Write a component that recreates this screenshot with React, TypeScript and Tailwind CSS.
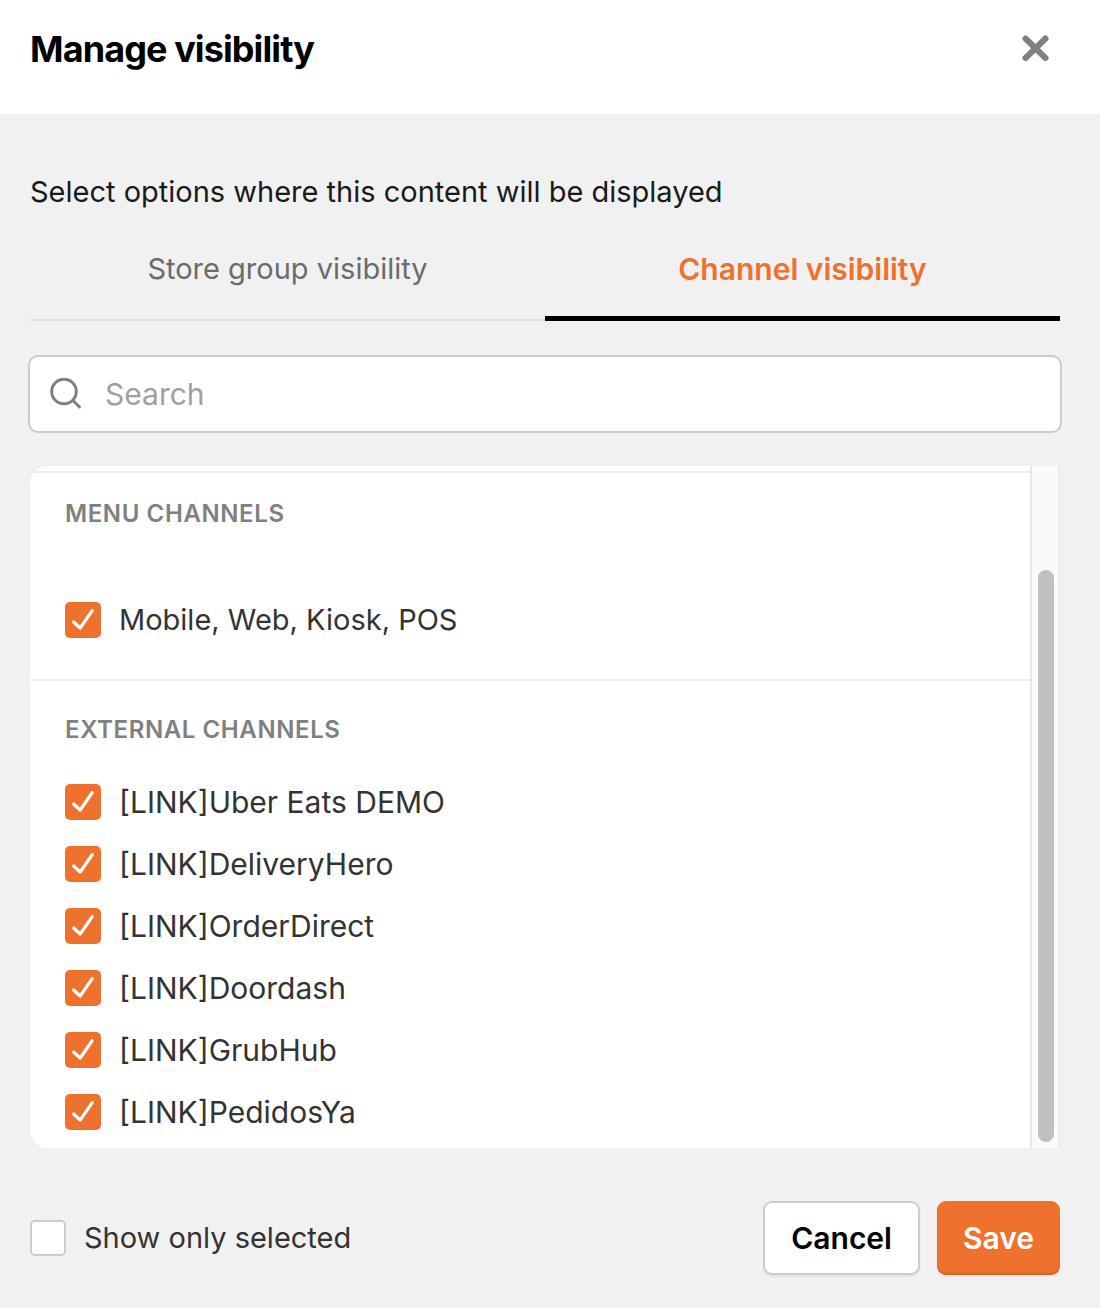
import { useState } from 'react';

interface Channel {
  id: string;
  name: string;
}

interface CheckboxProps {
  id: string;
  label: string;
  checked: boolean;
  small?: boolean;
  onChange: () => void;
}

type TabId = 'storeGroup' | 'channel';

const TABS: { id: TabId; label: string }[] = [
  { id: 'storeGroup', label: 'Store group visibility' },
  { id: 'channel', label: 'Channel visibility' }
];

const MENU_CHANNELS: Channel[] = [{ id: 'menu', name: 'Mobile, Web, Kiosk, POS' }];

const EXTERNAL_CHANNELS: Channel[] = [
  { id: 'uber_eats', name: '[LINK]Uber Eats DEMO' },
  { id: 'delivery_hero', name: '[LINK]DeliveryHero' },
  { id: 'order_direct', name: '[LINK]OrderDirect' },
  { id: 'doordash', name: '[LINK]Doordash' },
  { id: 'grubhub', name: '[LINK]GrubHub' },
  { id: 'pedidos_ya', name: '[LINK]PedidosYa' }
];

function Checkbox({ id, label, checked, small, onChange }: CheckboxProps) {
  return (
    <div className="flex items-center gap-[18px]">
      <span className="grid shrink-0">
        <input
          id={id}
          type="checkbox"
          checked={checked}
          onChange={onChange}
          className="col-start-1 row-start-1 size-9 appearance-none rounded-[5px] border-2 border-[#cccccc] bg-white checked:border-[#ee722e] checked:bg-[#ee722e]"
        />
        {checked && (
          <svg
            viewBox="0 0 36 36"
            fill="none"
            stroke="white"
            strokeWidth="3.2"
            strokeLinecap="round"
            strokeLinejoin="round"
            className="pointer-events-none col-start-1 row-start-1 size-9"
          >
            <path d="M8.6 20L15.2 26L27.2 8.6" />
          </svg>
        )}
      </span>
      <label htmlFor={id} className={`leading-9 text-[#333333] ${small ? 'text-[29px]' : 'text-[30px]'}`}>
        {label}
      </label>
    </div>
  );
}

export default function App() {
  const [activeTab, setActiveTab] = useState<TabId>('channel');
  const [search, setSearch] = useState('');
  const [onlySelected, setOnlySelected] = useState(false);
  const [selected, setSelected] = useState<string[]>(
    [...MENU_CHANNELS, ...EXTERNAL_CHANNELS].map((c) => c.id)
  );

  const toggle = (id: string) => {
    setSelected(selected.includes(id) ? selected.filter((s) => s !== id) : [...selected, id]);
  };

  const renderChannels = (channels: Channel[], small = false) =>
    channels
      .filter((c) => c.name.toLowerCase().includes(search.toLowerCase()))
      .filter((c) => !onlySelected || selected.includes(c.id))
      .map((c) => (
        <Checkbox
          key={c.id}
          id={c.id}
          label={c.name}
          small={small}
          checked={selected.includes(c.id)}
          onChange={() => toggle(c.id)}
        />
      ));

  return (
    <div className="flex min-h-screen flex-col bg-[#f1f1f1] font-['Inter',sans-serif]">
      {/* Header */}
      <header className="flex items-center justify-between bg-white pt-6 pr-[46px] pb-10 pl-[30px]">
        <h1 className="text-4xl leading-[50px] font-bold tracking-tight text-black">Manage visibility</h1>
        <button type="button" aria-label="Close" className="p-0.5">
          <svg viewBox="0 0 34 34" stroke="#808080" strokeWidth="6" strokeLinecap="round" className="size-[34px]">
            <path d="M7.5 6.5L27.5 26M27.5 6.5L7.5 26" />
          </svg>
        </button>
      </header>

      <main className="flex flex-col pt-[60px] pr-10 pb-8 pl-[30px]">
        <p className="text-[29px] leading-9 text-[#1a1a1a]">Select options where this content will be displayed</p>

        {/* Tabs */}
        <div role="tablist" className="mt-6 flex">
          {TABS.map((tab) => (
            <button
              key={tab.id}
              type="button"
              role="tab"
              aria-selected={activeTab === tab.id}
              onClick={() => setActiveTab(tab.id)}
              className={`h-[87px] flex-1 pt-[17px] leading-9 ${
                activeTab === tab.id
                  ? 'border-b-5 border-black pb-[29px] text-[30px] font-semibold text-[#ee722e]'
                  : 'border-b-2 border-[#e0e0e0] pb-8 text-[29px] text-[#6b6b6b]'
              }`}
            >
              {tab.label}
            </button>
          ))}
        </div>

        {/* Search */}
        <div className="-mx-0.5 mt-[34px] flex h-[78px] items-center gap-[23px] rounded-[10px] border-2 border-[#cccccc] bg-white px-5">
          <svg viewBox="0 0 32 32" fill="none" stroke="#808080" strokeWidth="3" strokeLinecap="round" className="size-8 shrink-0">
            <circle cx="14" cy="13.5" r="12.3" />
            <path d="M23 22.5L29.5 29" />
          </svg>
          <input
            type="text"
            aria-label="Search"
            placeholder="Search"
            value={search}
            onChange={(e) => setSearch(e.target.value)}
            className="min-w-0 flex-1 text-[30px] leading-9 text-[#333333] outline-none placeholder:text-[#a0a0a0]"
          />
        </div>

        {/* Channel list */}
        <div className="mt-[33px] flex overflow-hidden rounded-l-[18px] bg-white">
          <div className="min-w-0 flex-1 pt-[5px]">
            <section className="border-t-2 border-[#ececec] px-[35px] pt-6 pb-[41px]">
              <h2 className="text-2xl leading-[34px] font-semibold tracking-wide text-[#808080]">MENU CHANNELS</h2>
              <div className="mt-[71px] flex flex-col gap-[26px]">{renderChannels(MENU_CHANNELS, true)}</div>
            </section>
            <section className="border-t-2 border-[#ececec] px-[35px] pt-8 pb-[18px]">
              <h2 className="text-2xl leading-[34px] font-semibold tracking-wide text-[#808080]">EXTERNAL CHANNELS</h2>
              <div className="mt-[37px] flex flex-col gap-[26px]">{renderChannels(EXTERNAL_CHANNELS)}</div>
            </section>
          </div>
          {/* Scrollbar track and thumb */}
          <div className="flex w-[30px] flex-col border-x-2 border-l-[#e8e8e8] border-r-[#ededed] bg-[#fafafa] pt-[104px] pr-1 pb-1.5 pl-1.5">
            <div className="flex-1 rounded-full bg-[#c1c1c1]" />
          </div>
        </div>

        {/* Footer */}
        <footer className="mt-[53px] flex items-center justify-between">
          <Checkbox
            id="only-selected"
            label="Show only selected"
            small
            checked={onlySelected}
            onChange={() => setOnlySelected(!onlySelected)}
          />
          <div className="flex gap-[17px] text-[30px] leading-9 font-semibold">
            <button
              type="button"
              className="h-[74px] rounded-[9px] border-2 border-[#cccccc] bg-white px-[26px] text-black shadow-[0_2px_2px_rgba(0,0,0,0.06)]"
            >
              Cancel
            </button>
            <button
              type="button"
              className="h-[74px] rounded-[9px] bg-[#ee722e] px-[26px] text-white shadow-[inset_0_-2px_1px_rgba(0,0,0,0.12),0_2px_2px_rgba(0,0,0,0.06)]"
            >
              Save
            </button>
          </div>
        </footer>
      </main>
    </div>
  );
}
